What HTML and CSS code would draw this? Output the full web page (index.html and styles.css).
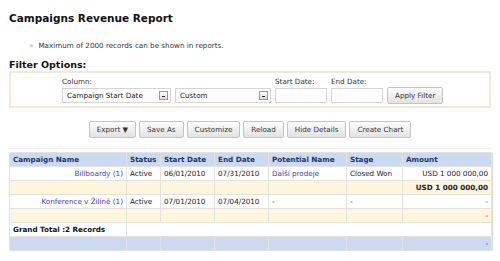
FILE: index.html
```html
<!DOCTYPE html>
<html lang="en">
<head>
  <meta charset="UTF-8">
  <title>Campaigns Revenue Report</title>
  <link rel="stylesheet" href="styles.css">
</head>
<body>
  <div class="page">
    <h1>Campaigns Revenue Report</h1>

    <ul class="notes">
      <li>Maximum of 2000 records can be shown in reports.</li>
    </ul>

    <h2>Filter Options:</h2>
    <div class="filter-box">
      <div class="field">
        <label>Column:</label>
        <div class="controls">
          <div class="select sel-column"><span>Campaign Start Date</span><i class="arrow"></i></div>
          <div class="select sel-range"><span>Custom</span><i class="arrow"></i></div>
        </div>
      </div>
      <div class="field">
        <label>Start Date:</label>
        <div class="input"></div>
      </div>
      <div class="field">
        <label>End Date:</label>
        <div class="input"></div>
      </div>
      <div class="field">
        <label>&nbsp;</label>
        <button class="btn">Apply Filter</button>
      </div>
    </div>

    <div class="toolbar">
      <button class="btn">Export &#9660;</button>
      <button class="btn">Save As</button>
      <button class="btn">Customize</button>
      <button class="btn">Reload</button>
      <button class="btn">Hide Details</button>
      <button class="btn">Create Chart</button>
    </div>

    <table class="report">
      <colgroup>
        <col style="width:117px">
        <col style="width:34px">
        <col style="width:54px">
        <col style="width:54px">
        <col style="width:78px">
        <col style="width:56px">
        <col>
      </colgroup>
      <thead>
        <tr>
          <th>Campaign Name</th>
          <th>Status</th>
          <th>Start Date</th>
          <th>End Date</th>
          <th>Potential Name</th>
          <th>Stage</th>
          <th>Amount</th>
        </tr>
      </thead>
      <tbody>
        <tr>
          <td class="right"><a href="#">Billboardy (1)</a></td>
          <td>Active</td>
          <td>06/01/2010</td>
          <td>07/31/2010</td>
          <td><a href="#">Další prodeje</a></td>
          <td>Closed Won</td>
          <td class="right">USD 1 000 000,00</td>
        </tr>
        <tr class="subtotal">
          <td></td><td></td><td></td><td></td><td></td><td></td>
          <td class="right"><b>USD 1 000 000,00</b></td>
        </tr>
        <tr>
          <td class="right"><a href="#">Konference v Žilině (1)</a></td>
          <td>Active</td>
          <td>07/01/2010</td>
          <td>07/04/2010</td>
          <td>-</td>
          <td>-</td>
          <td class="right">-</td>
        </tr>
        <tr class="subtotal">
          <td></td><td></td><td></td><td></td><td></td><td></td>
          <td class="right">-</td>
        </tr>
        <tr class="grand">
          <td><b>Grand Total :2 Records</b></td>
          <td colspan="6"></td>
        </tr>
        <tr class="totals">
          <td></td><td></td><td></td><td></td><td></td><td></td>
          <td class="right">-</td>
        </tr>
      </tbody>
    </table>
  </div>
</body>
</html>
```

FILE: styles.css
```css
body {
  margin: 0;
  background: #fff;
  color: #222;
  font-family: "DejaVu Sans", Verdana, sans-serif;
  font-size: 7.2px;
}

.page {
  padding: 9px 9px 0 9px;
}

h1 {
  font-size: 10.5px;
  margin: 3px 0 0 0;
  color: #111;
}

.notes {
  margin: 17px 0 0 0;
  padding-left: 20px;
  list-style: none;
  color: #333;
}

.notes li::before {
  content: "\00bb";
  color: #aaa;
  margin-right: 5px;
}

h2 {
  font-size: 9.5px;
  margin: 9px 0 0 0;
  color: #111;
}

/* Filter box */
.filter-box {
  display: flex;
  gap: 4px;
  border: 2px solid #f2ead9;
  padding: 4px 0 2px 51px;
  margin-top: 1px;
}

.field label {
  display: block;
  height: 11px;
  color: #333;
}

.controls {
  display: flex;
  gap: 4px;
}

.select {
  display: flex;
  align-items: center;
  justify-content: space-between;
  box-sizing: border-box;
  height: 15px;
  border: 1px solid #d4d4d4;
  padding: 0 2px 0 4px;
  color: #222;
}

.sel-column { width: 109px; }
.sel-range { width: 96px; }

.arrow {
  width: 7px;
  height: 7px;
  border: 1px solid #999;
  background: linear-gradient(#fff, #ddd);
  position: relative;
}

.arrow::after {
  content: "";
  position: absolute;
  left: 2px;
  top: 4px;
  width: 3px;
  height: 1px;
  background: #222;
}

.input {
  box-sizing: border-box;
  width: 52px;
  height: 15px;
  border: 1px solid #d4d4d4;
}

.btn {
  font-family: inherit;
  font-size: 7.2px;
  color: #333;
  height: 17px;
  padding: 0 7px;
  border: 1px solid #c4c4c4;
  border-radius: 2px;
  background: linear-gradient(#fdfdfd, #e2e2e2);
}

.filter-box .btn {
  margin-top: -1px;
  padding: 0 7px;
}

/* Toolbar */
.toolbar {
  display: flex;
  justify-content: center;
  gap: 3px;
  margin-top: 13px;
  padding-bottom: 10px;
  border-bottom: 1px solid #f3f3f3;
}

/* Report table */
.report {
  width: 483px;
  margin-top: 3px;
  border-collapse: collapse;
  table-layout: fixed;
  border: 1px solid #c8c8c8;
  box-shadow: 1px 1px 1px #ddd;
}

.report th,
.report td {
  height: 13px;
  padding: 0 3px;
  border: 1px solid #e2e2e2;
  text-align: left;
  white-space: nowrap;
}

.report th {
  background: #cbdaf0;
  color: #1f3470;
  font-weight: bold;
}

.report td.right {
  text-align: right;
}

.report a {
  color: #3a3fa8;
  text-decoration: none;
}

.subtotal td {
  background: #fdf5dc;
}

.grand td {
  background: #fff;
  color: #111;
}

.totals td {
  background: #ccd9ee;
}
```
